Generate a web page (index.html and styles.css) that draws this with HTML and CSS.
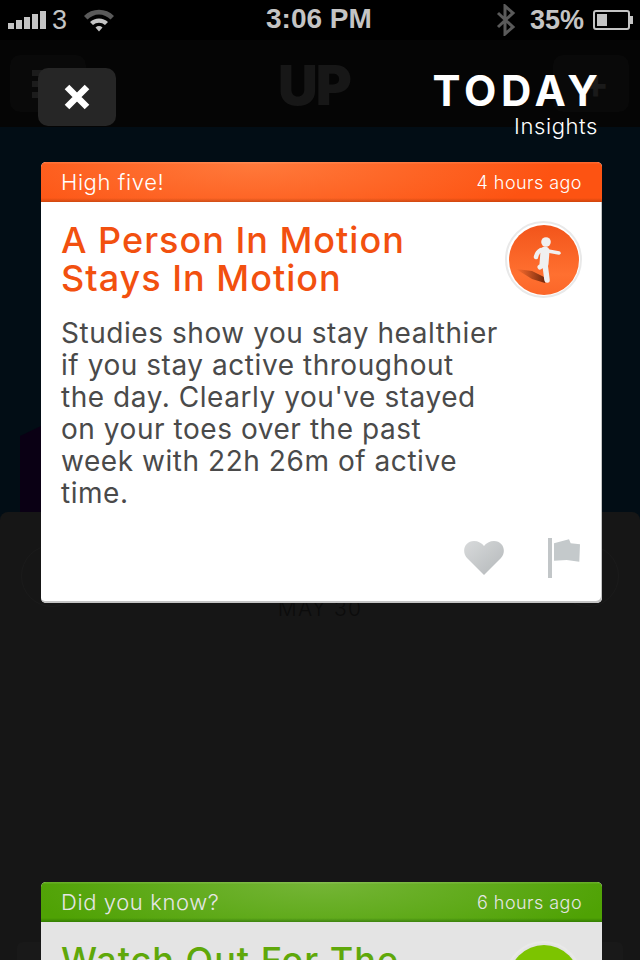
FILE: index.html
```html
<!DOCTYPE html>
<html lang="en">
<head>
    <meta charset="UTF-8">
    <meta name="viewport" content="width=device-width, initial-scale=1.0">
    <title>UP - Today Insights</title>
    <link rel="stylesheet" href="styles.css">
</head>
<body>
    <div class="screen">
        <div class="status-bar">
            <div class="status-left">
                <svg class="signal" width="38" height="20" viewBox="0 0 38 20">
                    <rect x="0" y="13" width="6" height="6"/>
                    <rect x="8" y="10" width="6" height="9"/>
                    <rect x="16" y="7" width="6" height="12"/>
                    <rect x="24" y="4" width="6" height="15"/>
                    <rect x="32" y="1" width="6" height="18"/>
                </svg>
                <span class="carrier">3</span>
                <svg class="wifi" width="32" height="24" viewBox="0 0 32 24">
                    <path d="M1 8 A21 21 0 0 1 31 8 L27.500 11.500 A16 16 0 0 0 4.500 11.500 Z" fill="#5a5a5a"/>
                    <path d="M7 14 A13 13 0 0 1 25 14 L22 17 A9 9 0 0 0 10 17 Z" fill="#c4c4c4"/>
                    <path d="M12.500 19.500 A5.500 5.500 0 0 1 19.500 19.500 L16 23.500 Z" fill="#c4c4c4"/>
                </svg>
            </div>
            <div class="status-time">3:06 PM</div>
            <div class="status-right">
                <svg class="bluetooth" width="20" height="32" viewBox="0 0 20 32">
                    <path d="M2 9 L17 23 L9 30 V2 L17 9 L2 23" fill="none" stroke="#5a5a5a" stroke-width="3"/>
                </svg>
                <span class="battery-pct">35%</span>
                <div class="battery"><div class="battery-level"></div></div>
                <div class="battery-tip"></div>
            </div>
        </div>

        <div class="nav-bar">
            <div class="ghost-btn ghost-btn-left">
                <div class="ghost-line"></div>
                <div class="ghost-line"></div>
                <div class="ghost-line"></div>
            </div>
            <div class="ghost-logo">UP</div>
            <div class="ghost-btn ghost-btn-right"></div>
            <div class="ghost-plus">+</div>
            <div class="close-btn">
                <svg width="28" height="28" viewBox="0 0 28 28">
                    <path d="M4 4 L24 24 M24 4 L4 24" stroke="#fff" stroke-width="6.500" fill="none"/>
                </svg>
            </div>
            <div class="nav-title">
                <div class="nav-today">TODAY</div>
                <div class="nav-sub">Insights</div>
            </div>
        </div>

        <div class="content">
            <div class="purple-block"></div>
            <div class="dim-panel">
                <div class="ghost-circle ghost-circle-left"></div>
                <div class="ghost-circle ghost-circle-right"></div>
                <div class="ghost-date">MAY 30</div>
                <div class="ghost-row"></div>
            </div>

            <div class="card">
                <div class="card-head card-head-orange">
                    <span>High five!</span>
                    <span class="card-time">4 hours ago</span>
                </div>
                <div class="card-body">
                    <div class="card-top">
                        <h2 class="card-title">A Person In Motion<br>Stays In Motion</h2>
                        <div class="badge badge-orange">
                            <svg width="64" height="64" viewBox="0 0 64 64">
                                <defs>
                                    <linearGradient id="shadowFill" x1="0" y1="0" x2="1" y2="0">
                                        <stop offset="0" stop-color="#6e2208" stop-opacity="0"/>
                                        <stop offset="1" stop-color="#5a1c06" stop-opacity="0.9"/>
                                    </linearGradient>
                                </defs>
                                <path d="M4 41 L20 43 L34 50 L33 55 L20 51 Z" fill="url(#shadowFill)"/>
                                <circle cx="34" cy="14" r="4.800" fill="#f0f0f0"/>
                                <g fill="none" stroke="#f0f0f0" stroke-linecap="round">
                                    <path d="M33 23 L32 36" stroke-width="9"/>
                                    <path d="M29 22 Q25 24 24 29" stroke-width="4.500"/>
                                    <path d="M36 23 L47 25" stroke-width="3.500"/>
                                    <path d="M33 36 L35 52" stroke-width="5.500"/>
                                    <path d="M31 37 L28 39" stroke-width="5"/>
                                </g>
                            </svg>
                        </div>
                    </div>
                    <p class="card-text">Studies show you stay healthier<br>if you stay active throughout<br>the day. Clearly you've stayed<br>on your toes over the past<br>week with 22h 26m of active<br>time.</p>
                    <div class="card-actions">
                        <svg width="42" height="36" viewBox="0 0 42 36">
                            <defs>
                                <linearGradient id="heartFill" x1="0" y1="0" x2="1" y2="1">
                                    <stop offset="0" stop-color="#d8dadb"/>
                                    <stop offset="1" stop-color="#b4b8ba"/>
                                </linearGradient>
                            </defs>
                            <path d="M21 35 L4 18 C-2 11 2 1 11 1 C15 1 19 3 21 6 C23 3 27 1 31 1 C40 1 44 11 38 18 Z" fill="url(#heartFill)"/>
                        </svg>
                        <svg width="34" height="42" viewBox="0 0 34 42">
                            <rect x="0" y="1" width="4" height="40" fill="#c2c6c8"/>
                            <path d="M6 6.300 L21 2.300 L22.700 6.300 L32 7.300 L31.300 24.700 L18.700 23 L6 23.700 Z" fill="#c4c9cb"/>
                        </svg>
                    </div>
                </div>
            </div>

            <div class="card card-next">
                <div class="card-head card-head-green">
                    <span>Did you know?</span>
                    <span class="card-time">6 hours ago</span>
                </div>
                <div class="card-body card-body-dim">
                    <div class="card-top">
                        <h2 class="card-title card-title-green">Watch Out For The</h2>
                        <div class="badge badge-green"></div>
                    </div>
                </div>
            </div>
        </div>
    </div>
</body>
</html>
```

FILE: styles.css
```css
html, body {
    margin: 0;
    padding: 0;
    background-color: #000;
}
body {
    font-family: Inter, "Open Sans", Arial, sans-serif;
}
.screen {
    width: 640px;
    height: 960px;
    overflow: hidden;
    display: flex;
    flex-direction: column;
}

/* status bar */
.status-bar {
    height: 40px;
    flex: none;
    background-color: #000;
    color: #c4c4c4;
    display: flex;
    align-items: center;
    justify-content: space-between;
    font-family: "Liberation Sans", Arial, sans-serif;
    position: relative;
}
.status-left {
    display: flex;
    align-items: center;
    padding-left: 8px;
}
.signal {
    fill: #c4c4c4;
}
.carrier {
    font-size: 27px;
    margin-left: 6px;
}
.wifi {
    margin-left: 16px;
}
.status-time {
    position: absolute;
    left: 266px;
    top: 3px;
    font-size: 28px;
    font-weight: bold;
    line-height: 32px;
}
.status-right {
    display: flex;
    align-items: center;
    padding-right: 7px;
}
.battery-pct {
    font-size: 27px;
    font-weight: bold;
    margin-left: 14px;
    margin-right: 9px;
}
.battery {
    width: 29px;
    height: 12px;
    border: 2px solid #c4c4c4;
    border-radius: 3px;
    padding: 2px;
}
.battery-level {
    width: 10px;
    height: 12px;
    background-color: #c4c4c4;
}
.battery-tip {
    width: 3px;
    height: 8px;
    background-color: #c4c4c4;
}

/* nav bar, mostly under the dim layer */
.nav-bar {
    height: 87px;
    flex: none;
    background-color: #050505;
    position: relative;
    z-index: 1;
}
.ghost-btn {
    position: absolute;
    top: 15px;
    width: 76px;
    height: 57px;
    background-color: #090909;
    border-radius: 10px;
}
.ghost-btn-left {
    left: 10px;
    padding: 15px 0 0 22px;
    box-sizing: border-box;
}
.ghost-btn-right {
    left: 553px;
}
.ghost-line {
    width: 30px;
    height: 6px;
    margin-bottom: 5px;
    background-color: #1c1c1c;
}
.ghost-logo {
    position: absolute;
    left: 278px;
    top: 15px;
    font-size: 55px;
    font-weight: 900;
    line-height: 60px;
    letter-spacing: -2px;
    color: #171717;
}
.ghost-plus {
    position: absolute;
    left: 582px;
    top: 21px;
    font-size: 40px;
    font-weight: 700;
    line-height: 46px;
    color: #1a1a1a;
}
.close-btn {
    position: absolute;
    left: 38px;
    top: 28px;
    width: 78px;
    height: 58px;
    background-color: #262626;
    border-radius: 10px;
    display: flex;
    align-items: center;
    justify-content: center;
}
.nav-title {
    position: absolute;
    right: 42px;
    top: 29px;
    text-align: right;
    color: #fff;
}
.nav-today {
    font-size: 42px;
    font-weight: 700;
    line-height: 44px;
    letter-spacing: 4.800px;
    margin-right: -4.800px;
}
.nav-sub {
    font-size: 22px;
    line-height: 26px;
    font-weight: 300;
    letter-spacing: 0.600px;
}

/* main area */
.content {
    flex: 1;
    position: relative;
    background-color: #020d15;
    padding: 35px 38px 0 41px;
}
.purple-block {
    position: absolute;
    left: 20px;
    top: 299px;
    width: 40px;
    height: 90px;
    background-color: #0a0014;
    clip-path: polygon(0 10px, 21px 0, 100% 0, 100% 100%, 0 100%);
}
.dim-panel {
    position: absolute;
    left: 0;
    right: 0;
    top: 385px;
    bottom: 0;
    background-color: #161616;
    border-radius: 8px 8px 0 0;
}
.ghost-circle {
    position: absolute;
    top: 33px;
    width: 60px;
    height: 60px;
    border: 1px solid #1b1b1b;
    border-radius: 50%;
}
.ghost-circle-left {
    left: 21px;
}
.ghost-circle-right {
    right: 21px;
}
.ghost-date {
    position: absolute;
    left: 0;
    right: 0;
    top: 85px;
    text-align: center;
    font-size: 21px;
    font-weight: 300;
    line-height: 24px;
    letter-spacing: 1.200px;
    color: #0c0c0c;
}
.ghost-row {
    position: absolute;
    left: 17px;
    right: 17px;
    top: 430px;
    height: 18px;
    background-color: #191919;
    border-radius: 6px 6px 0 0;
}

/* cards */
.card {
    position: relative;
    width: 561px;
    height: 441px;
    background-color: #fff;
    border-radius: 5px;
    overflow: hidden;
    display: flex;
    flex-direction: column;
    box-shadow: inset -1px -2px 0 #c4c4c4;
}
.card-next {
    margin-top: 279px;
}
.card-head {
    height: 40px;
    flex: none;
    padding: 0 20px;
    display: flex;
    align-items: center;
    justify-content: space-between;
    color: #fff;
    font-size: 22px;
    font-weight: 300;
    letter-spacing: 0.600px;
}
.card-head-orange {
    background:
        linear-gradient(rgba(255,255,255,0.15), transparent 6%, transparent 90%, rgba(120,40,0,0.35)),
        radial-gradient(ellipse 300px 70px at 38% 0, #ff7a3c, #fd5312);
}
.card-head-green {
    background:
        linear-gradient(rgba(255,255,255,0.15), transparent 6%, transparent 90%, rgba(0,60,0,0.35)),
        radial-gradient(ellipse 300px 70px at 50% 0, #75b537, #4fa204);
    color: #e6e6e6;
}
.card-time {
    font-size: 18px;
    letter-spacing: 0.450px;
}
.card-body {
    flex: 1;
    padding: 19px 20px 0;
    display: flex;
    flex-direction: column;
}
.card-body-dim {
    background-color: #e4e4e4;
}
.card-top {
    display: flex;
    justify-content: space-between;
}
.card-title {
    margin: 0;
    font-size: 36px;
    font-weight: 500;
    line-height: 38px;
    letter-spacing: 1px;
    color: #f2500f;
}
.card-title-green {
    color: #5fa80a;
}
.badge {
    width: 70px;
    height: 70px;
    flex: none;
    border-radius: 50%;
    border: 2px solid #e9e9e9;
    padding: 1.500px;
    background-clip: content-box;
    display: flex;
    align-items: center;
    justify-content: center;
}
.badge-orange {
    background-image: linear-gradient(#f2541a, #ff7030 70%, #fb6528);
}
.badge-green {
    background-color: #7cc400;
}
.card-text {
    margin: 19px 0 0;
    font-size: 28px;
    line-height: 32px;
    font-weight: 400;
    letter-spacing: 0.550px;
    color: #4a4a4a;
}
.card-actions {
    margin-top: auto;
    padding-bottom: 24px;
    display: flex;
    justify-content: flex-end;
    align-items: center;
    gap: 43px;
}
```
